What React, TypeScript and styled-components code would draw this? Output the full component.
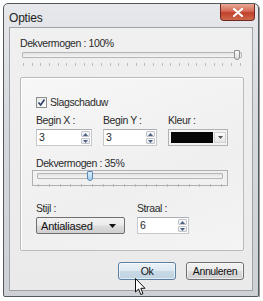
import styled, { createGlobalStyle } from 'styled-components';

const GlobalStyle = createGlobalStyle`
  html, body {
    margin: 0;
    padding: 0;
    background: #ffffff;
  }
  body {
    font-family: "Liberation Sans", Arial, sans-serif;
    font-size: 10.5px;
    letter-spacing: -0.4px;
    color: #2a2a2a;
  }
`;

function Spinner({ value, width }: { value: string; width: number }) {
  return (
    <SpinBox $width={width}>
      <SpinValue>{value}</SpinValue>
      <SpinButtons>
        <SpinButton>
          <svg width="5" height="3" viewBox="0 0 5 3">
            <path d="M0 3 L2.5 0 L5 3 Z" fill="#4d6185" />
          </svg>
        </SpinButton>
        <SpinButton>
          <svg width="5" height="3" viewBox="0 0 5 3">
            <path d="M0 0 L2.5 3 L5 0 Z" fill="#4d6185" />
          </svg>
        </SpinButton>
      </SpinButtons>
    </SpinBox>
  );
}

function Slider({ ticks, pos, active }: { ticks: number; pos: number; active?: boolean }) {
  return (
    <SliderWrap>
      <Track>
        <Thumb $active={active} style={{ left: `${pos}%` }} />
      </Track>
      <Ticks>
        {Array.from({ length: ticks }, (_, i) => (
          <Tick key={i} />
        ))}
      </Ticks>
    </SliderWrap>
  );
}

export default function App() {
  return (
    <>
      <GlobalStyle />
      <Page>
        <Window>
          <TitleBar>
            <Title>Opties</Title>
            <CloseButton>
              <svg width="10" height="9" viewBox="0 0 10 9">
                <path d="M1 1 L9 8 M9 1 L1 8" stroke="#ffffff" strokeWidth="2.2" strokeLinecap="round" />
              </svg>
            </CloseButton>
          </TitleBar>
          <Client>
            <Label>Dekvermogen : 100%</Label>
            <Slider ticks={26} pos={98} />
            <Group>
              <CheckRow>
                <CheckBox>
                  <svg width="9" height="9" viewBox="0 0 9 9">
                    <path d="M1.5 4.5 L3.6 7 L7.5 1.5" stroke="#2b3f6a" strokeWidth="1.6" fill="none" />
                  </svg>
                </CheckBox>
                Slagschaduw
              </CheckRow>
              <FieldGrid>
                <Label>Begin X :</Label>
                <Label>Begin Y :</Label>
                <Label>Kleur :</Label>
                <Spinner value="3" width={56} />
                <Spinner value="3" width={54} />
                <ColorPicker>
                  <Swatch />
                  <DropButton>
                    <svg width="5" height="3" viewBox="0 0 5 3">
                      <path d="M0 0 L2.5 3 L5 0 Z" fill="#555" />
                    </svg>
                  </DropButton>
                </ColorPicker>
              </FieldGrid>
              <SubLabel>Dekvermogen : 35%</SubLabel>
              <FocusBox>
                <Slider ticks={18} pos={28} active />
              </FocusBox>
              <BottomGrid>
                <Label>Stijl :</Label>
                <Label>Straal :</Label>
                <Combo>
                  Antialiased
                  <svg width="7" height="4" viewBox="0 0 7 4">
                    <path d="M0 0 L3.5 4 L7 0 Z" fill="#111" />
                  </svg>
                </Combo>
                <Spinner value="6" width={52} />
              </BottomGrid>
            </Group>
            <ButtonRow>
              <Button $primary>Ok</Button>
              <Button>Annuleren</Button>
              <Cursor>
                <svg width="12" height="18" viewBox="0 0 12 18">
                  <path
                    d="M0.5 0.5 L0.5 14 L3.6 11 L5.8 16.5 L8 15.6 L5.8 10.3 L10 10.3 Z"
                    fill="#ffffff"
                    stroke="#111"
                    strokeWidth="1"
                    strokeLinejoin="round"
                  />
                </svg>
              </Cursor>
            </ButtonRow>
          </Client>
        </Window>
      </Page>
    </>
  );
}

const Page = styled.div`
  padding: 3px 0 0 3px;
`;

const Window = styled.div`
  width: 256px;
  height: 294px;
  box-sizing: border-box;
  border: 1px solid #55585d;
  border-radius: 5px 5px 2px 2px;
  background: linear-gradient(180deg, #e6e8eb 0%, #d5d8dc 40%, #cdd0d4 100%);
  padding: 0 5px 5px 5px;
  display: flex;
  flex-direction: column;
  box-shadow: 1px 1px 0 #9a9a9a;
`;

const TitleBar = styled.div`
  height: 23px;
  display: flex;
  align-items: flex-start;
  justify-content: space-between;
`;

const Title = styled.div`
  font-size: 12px;
  letter-spacing: -0.2px;
  color: #222;
  padding: 7px 0 0 0;
`;

const CloseButton = styled.div`
  width: 35px;
  height: 17px;
  margin-right: -2px;
  box-sizing: border-box;
  border: 1px solid #6e2a22;
  border-top: none;
  border-radius: 0 0 4px 4px;
  background: linear-gradient(180deg, #e9a996 0%, #d46a55 45%, #c0402a 55%, #cf6a4c 100%);
  display: flex;
  align-items: center;
  justify-content: center;
`;

const Client = styled.div`
  flex: 1;
  border: 1px solid #9fa3a8;
  background: linear-gradient(180deg, #f0f0f0 0%, #eaeaea 100%);
  padding: 9px 8px 0 10px;
  display: flex;
  flex-direction: column;
`;

const Label = styled.div`
  line-height: 13px;
  white-space: nowrap;
`;

const SubLabel = styled(Label)`
  margin-top: 11px;
`;

const SliderWrap = styled.div`
  height: 16px;
  display: flex;
  flex-direction: column;
  padding-top: 2px;
  box-sizing: border-box;
`;

const Track = styled.div`
  position: relative;
  height: 4px;
  margin: 0 2px;
  border: 1px solid #b4b6b8;
  border-radius: 1px;
  background: linear-gradient(180deg, #e2e2e2, #f4f4f4);
`;

const Thumb = styled.div<{ $active?: boolean }>`
  position: absolute;
  top: -3px;
  width: 4px;
  height: 8px;
  margin-left: -3px;
  border: 1px solid ${p => (p.$active ? '#5b88b3' : '#8c8e90')};
  border-radius: 1px 1px 3px 3px;
  background: ${p => (p.$active ? 'linear-gradient(180deg, #d9ecfa, #a9d0ef)' : 'linear-gradient(180deg, #fafafa, #dcdcdc)')};
`;

const Ticks = styled.div`
  display: flex;
  justify-content: space-between;
  margin: 5px 3px 0 3px;
`;

const Tick = styled.span`
  width: 1px;
  height: 3px;
  background: #b9bbbd;
`;

const Group = styled.div`
  margin-top: 11px;
  height: 174px;
  box-sizing: border-box;
  border: 1px solid #b9bcbf;
  border-radius: 2px;
  box-shadow: inset 1px 1px 0 #ffffff;
  background: linear-gradient(160deg, #f7f7f7 0%, #efefef 60%, #f4f4f4 100%);
  padding: 18px 0 0 15px;
  display: flex;
  flex-direction: column;
`;

const CheckRow = styled.div`
  display: flex;
  align-items: center;
  gap: 3px;
  line-height: 13px;
  margin-bottom: 5px;
`;

const CheckBox = styled.div`
  width: 11px;
  height: 11px;
  box-sizing: border-box;
  border: 1px solid #8e8f8f;
  background: linear-gradient(135deg, #e8e8e8, #ffffff);
  display: flex;
  align-items: center;
  justify-content: center;
`;

const FieldGrid = styled.div`
  display: grid;
  grid-template-columns: 56px 54px 60px;
  column-gap: 11px;
  row-gap: 2px;
`;

const SpinBox = styled.div<{ $width: number }>`
  width: ${p => p.$width}px;
  height: 17px;
  box-sizing: border-box;
  border: 1px solid #c5c8cc;
  border-top-color: #abadb3;
  background: #ffffff;
  display: flex;
  align-items: center;
  justify-content: space-between;
`;

const SpinValue = styled.span`
  padding-left: 2px;
  line-height: 13px;
`;

const SpinButtons = styled.div`
  display: flex;
  flex-direction: column;
  gap: 1px;
  margin-right: 1px;
`;

const SpinButton = styled.div`
  width: 9px;
  height: 6px;
  box-sizing: border-box;
  border: 1px solid #c2c6cc;
  border-radius: 1px;
  background: linear-gradient(180deg, #fbfbfb, #e4e6ea);
  display: flex;
  align-items: center;
  justify-content: center;
`;

const ColorPicker = styled.div`
  width: 60px;
  height: 17px;
  box-sizing: border-box;
  border: 1px solid #b0b2b5;
  background: #f3f3f3;
  padding: 2px 1px 2px 2px;
  display: flex;
  gap: 1px;
`;

const Swatch = styled.div`
  flex: 1;
  background: #050505;
`;

const DropButton = styled.div`
  width: 12px;
  border: 1px solid #cfd1d4;
  box-sizing: border-box;
  background: linear-gradient(180deg, #fbfbfb, #e6e6e6);
  display: flex;
  align-items: center;
  justify-content: center;
`;

const FocusBox = styled.div`
  width: 196px;
  height: 16px;
  margin-left: -4px;
  box-sizing: border-box;
  border: 1px solid #aeb0b3;
  padding: 0 2px;
  display: flex;
  flex-direction: column;
`;

const BottomGrid = styled.div`
  margin-top: 16px;
  display: grid;
  grid-template-columns: 89px 52px;
  column-gap: 12px;
  row-gap: 2px;
`;

const Combo = styled.div`
  height: 17px;
  box-sizing: border-box;
  border: 1px solid #707070;
  border-radius: 2px;
  background: linear-gradient(180deg, #f2f2f2 0%, #ebebeb 48%, #dddddd 52%, #cfcfcf 100%);
  padding: 0 8px 0 4px;
  display: flex;
  align-items: center;
  justify-content: space-between;
  font-size: 11px;
  letter-spacing: -0.2px;
  color: #111;
`;

const ButtonRow = styled.div`
  position: relative;
  margin-top: 11px;
  display: flex;
  justify-content: flex-end;
  gap: 10px;
`;

const Button = styled.div<{ $primary?: boolean }>`
  width: 58px;
  height: 18px;
  box-sizing: border-box;
  border: 1px solid ${p => (p.$primary ? '#5a7fa5' : '#707070')};
  border-radius: 3px;
  background: ${p =>
    p.$primary
      ? 'linear-gradient(180deg, #ecf3f8 0%, #dce8f1 48%, #c8d9e6 52%, #bfd2e0 100%)'
      : 'linear-gradient(180deg, #f2f2f2 0%, #ebebeb 48%, #dddddd 52%, #cfcfcf 100%)'};
  box-shadow: inset 0 0 0 1px rgba(255, 255, 255, 0.6);
  display: flex;
  align-items: center;
  justify-content: center;
  color: #111;
`;

const Cursor = styled.div`
  position: absolute;
  left: 115px;
  top: 16px;
  line-height: 0;
`;
